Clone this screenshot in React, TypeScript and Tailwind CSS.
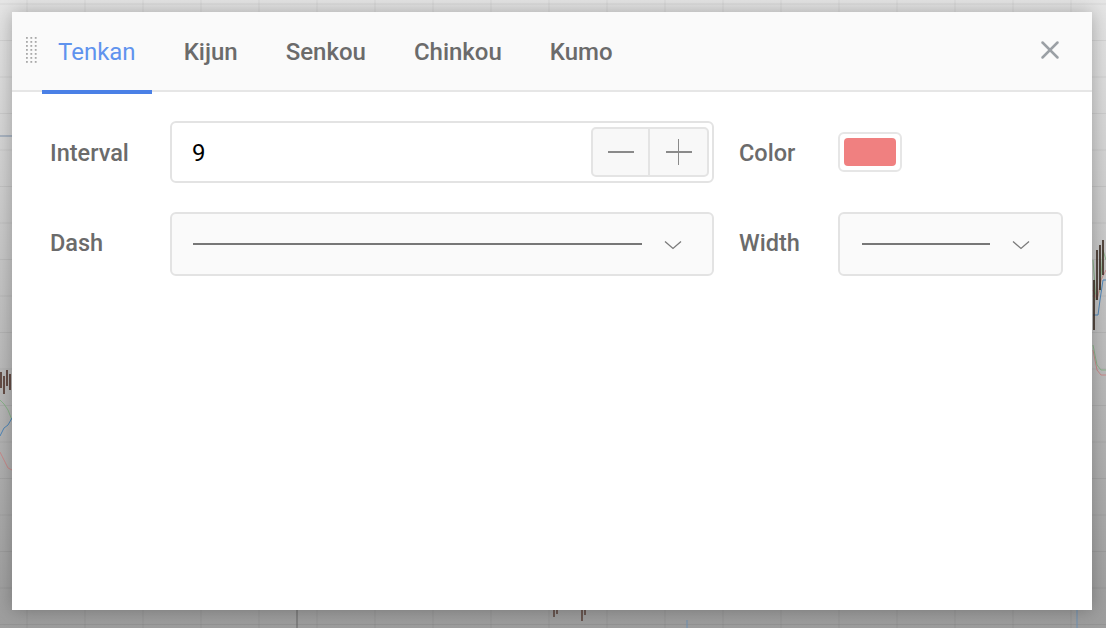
import { X } from 'lucide-react'

const tabs = ['Tenkan', 'Kijun', 'Senkou', 'Chinkou', 'Kumo']

const Chevron = () => (
  <svg width="18" height="10" viewBox="0 0 18 10" className="shrink-0">
    <path d="M1 1.5 L9 8.5 L17 1.5" fill="none" stroke="#7a7a7a" strokeWidth="1.3" />
  </svg>
)

const DragHandle = () => (
  <svg width="12" height="28" viewBox="0 0 12 28" className="shrink-0">
    {Array.from({ length: 7 }).map((_, r) =>
      [0, 1, 2].map((c) => (
        <rect key={`${r}-${c}`} x={1 + c * 4.4} y={1 + r * 4} width="1.8" height="1.8" fill="#a9a9a9" />
      ))
    )}
  </svg>
)

// the greyed chart behind the dialog
const ChartBackdrop = () => {
  const vx = Array.from({ length: 20 }).map((_, i) => 27 + i * 58)
  const hy = Array.from({ length: 18 }).map((_, i) => 4 + i * 36.5)
  return (
    <svg className="absolute inset-0" width="1106" height="628" viewBox="0 0 1106 628">
      {vx.map((x) => (
        <line key={'v' + x} x1={x} y1="0" x2={x} y2="628" stroke="rgba(0,0,0,0.06)" strokeWidth="1" />
      ))}
      {hy.map((y) => (
        <line key={'h' + y} x1="0" y1={y} x2="1106" y2={y} stroke="rgba(0,0,0,0.06)" strokeWidth="1" />
      ))}
      <line x1="0" y1="136" x2="12" y2="136" stroke="#7f93ad" strokeWidth="1" />
      <line x1="297" y1="610" x2="297" y2="628" stroke="#555" strokeWidth="0.8" />
      <line x1="1077" y1="610" x2="1077" y2="628" stroke="#6d90b3" strokeWidth="1" />
      <line x1="687" y1="620" x2="687" y2="628" stroke="#6d90b3" strokeWidth="1" />
      {/* left edge */}
      <path d="M0 400 L4 404 L8 410 L12 420" fill="none" stroke="#8ab38a" strokeWidth="1" />
      <path d="M0 436 L4 428 L8 425 L12 418" fill="none" stroke="#4f86b8" strokeWidth="1" />
      <path d="M0 452 L4 460 L8 468 L12 470" fill="none" stroke="#c98a8a" strokeWidth="1" />
      <path d="M1 372 V388 M4 376 V394 M7 370 V386 M10 374 V390" stroke="#4a2a20" strokeWidth="1.5" />
      {/* right edge */}
      <path d="M1093 260 L1096 300 L1100 290 L1103 250 L1106 260" fill="none" stroke="#8ab38a" strokeWidth="1" />
      <path d="M1093 315 L1098 315 L1100 300 L1103 280 L1106 280" fill="none" stroke="#4f86b8" strokeWidth="1" />
      <path d="M1093 290 L1097 300 L1101 280 L1106 270" fill="none" stroke="#c98a8a" strokeWidth="1" />
      <path d="M1093 350 L1097 370 L1101 375 L1106 375" fill="none" stroke="#c98a8a" strokeWidth="1" />
      <path d="M1093 345 L1097 365 L1101 370 L1106 370" fill="none" stroke="#8ab38a" strokeWidth="1" />
      <path d="M1094 280 V330 M1097 250 V300 M1100 245 V290 M1103 240 V275" stroke="#3a2a20" strokeWidth="1.6" />
      {/* bottom */}
      <path d="M554 610 V617 M557 610 V614 M582 610 V621 M585 610 V615" stroke="#4a2a20" strokeWidth="1.2" />
    </svg>
  )
}

export default function App() {
  return (
    <div className="relative h-[628px] w-full overflow-hidden bg-[linear-gradient(to_bottom,#e6e6e6,#9d9d9d)] font-['Roboto',sans-serif]">
      <ChartBackdrop />
      <div className="relative pt-[12px] pl-[12px] pr-[14px] pb-[18px] h-full">
        <div className="h-full bg-white flex flex-col shadow-[0_0_18px_rgba(0,0,0,0.28)]">
          {/* header */}
          <div className="h-[80px] shrink-0 bg-[#fafafa] border-b-2 border-[#e6e6e6] flex items-stretch pl-[13px] pr-[27px]">
            <div className="flex items-center pb-[2px]">
              <DragHandle />
            </div>
            <div className="flex items-stretch ml-[5px] gap-4">
              {tabs.map((t, i) => (
                <div key={t} className="relative flex items-center px-4 pt-[2px]">
                  <span
                    className={
                      i === 0
                        ? 'text-[24px] font-normal text-[#5f93ee]'
                        : 'text-[24px] font-medium text-[#6b6b6b]'
                    }
                  >
                    {t}
                  </span>
                  {i === 0 && <div className="absolute left-0 right-0 -bottom-[4px] h-[4px] bg-[#4a80e6]" />}
                </div>
              ))}
            </div>
            <div className="ml-auto flex items-center pb-[2px]">
              <X className="w-[30px] h-[30px] text-[#9ba0a5]" strokeWidth={2} />
            </div>
          </div>

          {/* body */}
          <div className="pt-[29px] pl-[38px] pr-[29px] grid grid-cols-[120px_544px_124px_225px] gap-y-[29px] items-center">
            <div className="text-[23.5px] font-medium text-[#6b6b6b] pt-[4px]">Interval</div>
            <div className="h-[62px] rounded-[6px] border-2 border-[#e3e3e3] bg-white flex items-center pl-[20px] pr-[3px]">
              <span className="text-[24px] text-black flex-1 pt-[1px]">9</span>
              <div className="flex h-[50px] rounded-[5px] border-2 border-[#e4e4e4] bg-[#f8f8f8] overflow-hidden">
                <button type="button" className="w-[57px] flex items-center justify-center border-r-2 border-[#e4e4e4]">
                  <span className="block w-[26px] h-[1.5px] bg-[#8a8a8a]" />
                </button>
                <button type="button" className="w-[57px] flex items-center justify-center relative">
                  <span className="block w-[26px] h-[1.5px] bg-[#8a8a8a]" />
                  <span className="absolute block w-[1.5px] h-[26px] bg-[#8a8a8a]" />
                </button>
              </div>
            </div>
            <div className="pl-[25px] text-[23.5px] font-medium text-[#6b6b6b] pt-[4px]">Color</div>
            <div>
              <div className="w-[64px] h-[40px] rounded-[6px] border-2 border-[#e6e6e6] bg-white p-[4px]">
                <div className="w-full h-full rounded-[4px] bg-[#f08080]" />
              </div>
            </div>

            <div className="text-[23.5px] font-medium text-[#6b6b6b]">Dash</div>
            <div className="h-[64px] rounded-[6px] border-2 border-[#e3e3e3] bg-[#fafafa] flex items-center pl-[21px] pr-[30px]">
              <div className="h-[2px] w-[449px] bg-[#777]" />
              <div className="ml-auto pt-[2px]">
                <Chevron />
              </div>
            </div>
            <div className="pl-[25px] text-[23.5px] font-medium text-[#6b6b6b]">Width</div>
            <div className="h-[64px] rounded-[6px] border-2 border-[#e3e3e3] bg-[#fafafa] flex items-center pl-[22px] pr-[31px]">
              <div className="h-[2px] w-[128px] bg-[#777]" />
              <div className="ml-auto pt-[2px]">
                <Chevron />
              </div>
            </div>
          </div>
        </div>
      </div>
    </div>
  )
}
